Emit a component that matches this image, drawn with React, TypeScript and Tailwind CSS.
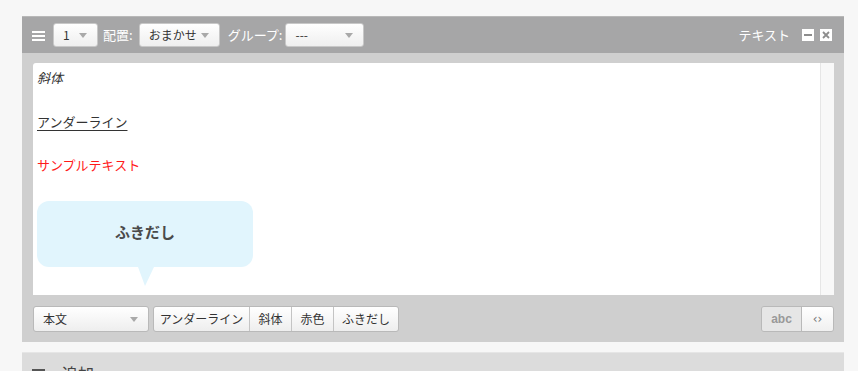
import React from "react";

const font = { fontFamily: '"Noto Sans CJK JP", "Noto Sans", "Liberation Sans", sans-serif' };

function Caret() {
  return (
    <svg width="8" height="5" viewBox="0 0 8 5" className="shrink-0">
      <polygon points="0,0 8,0 4,5" fill="#a9a9a9" />
    </svg>
  );
}

function Select({ label, width }: { label: string; width: string }) {
  return (
    <div
      className={`${width} h-[24px] flex items-center justify-between pl-[9px] pr-[10px] rounded-[3px] bg-gradient-to-b from-white to-[#efefef] border border-[#c8c8c8] text-[12px] text-[#333]`}
    >
      <span>{label}</span>
      <Caret />
    </div>
  );
}

function Hamburger({ color }: { color: string }) {
  return (
    <svg width="13" height="11" viewBox="0 0 13 11">
      <rect x="0" y="1" width="13" height="2" fill={color} />
      <rect x="0" y="5" width="13" height="2" fill={color} />
      <rect x="0" y="9" width="13" height="2" fill={color} />
    </svg>
  );
}

export default function App() {
  return (
    <div className="w-[858px] h-[371px] overflow-hidden bg-[#f7f7f7] pt-[16px] pl-[22px] pr-[14px]" style={font}>
      {/* panel */}
      <div className="bg-[#cfcfcf]">
        {/* header */}
        <div className="h-[37px] bg-[#a6a6a7] border-t border-[#b8b8b8] flex items-center pl-[10px] pr-[12px] text-white text-[13px]">
          <Hamburger color="#ffffff" />
          <div className="ml-[8px]">
            <Select label="1" width="w-[45px]" />
          </div>
          <span className="ml-[5px]">配置:</span>
          <div className="ml-[6px]">
            <Select label="おまかせ" width="w-[81px]" />
          </div>
          <span className="ml-[8px]">グループ:</span>
          <div className="ml-[3px]">
            <Select label="---" width="w-[79px]" />
          </div>
          <span className="ml-auto">テキスト</span>
          <div className="ml-[12px] w-[12px] h-[12px] bg-white flex items-center justify-center">
            <div className="w-[8px] h-[2px] bg-[#8d8d8d]" />
          </div>
          <div className="ml-[6px] w-[12px] h-[12px] bg-white flex items-center justify-center">
            <svg width="8" height="8" viewBox="0 0 8 8">
              <path d="M1 1L7 7M7 1L1 7" stroke="#8d8d8d" strokeWidth="1.8" />
            </svg>
          </div>
        </div>

        {/* body */}
        <div className="pt-[10px] pl-[11px] pr-[10px] pb-[10px]">
          <div className="h-[232px] bg-white rounded-tl-[3px] flex">
            <div className="flex-1 pl-[4px] pt-[6px] flex flex-col items-start text-[13px] leading-[18px] text-[#333]">
              <p className="italic">斜体</p>
              <p className="mt-[26px] underline underline-offset-[3px]">アンダーライン</p>
              <p className="mt-[25px] text-[#ff1a1a]">サンプルテキスト</p>
              <div className="relative mt-[27px]">
                <div className="w-[216px] h-[66px] pb-[4px] rounded-[12px] bg-[#e1f5fd] flex items-center justify-center text-[15px] font-bold text-[#4a4a4a]">
                  ふきだし
                </div>
                <svg className="absolute left-[101px] top-[66px]" width="16" height="19" viewBox="0 0 16 19">
                  <polygon points="0,0 16,0 7,19" fill="#e1f5fd" />
                </svg>
              </div>
            </div>
            <div className="w-[14px] bg-[#f8f8f8] border-l border-[#e6e6e6]" />
          </div>

          {/* toolbar */}
          <div className="mt-[11px] flex items-center text-[12px] text-[#333]">
            <div className="w-[116px] h-[26px] flex items-center justify-between pl-[9px] pr-[10px] rounded-[3px] bg-gradient-to-b from-white to-[#eeeeee] border border-[#b9b9b9]">
              <span>本文</span>
              <Caret />
            </div>
            <div className="ml-[4px] h-[26px] flex rounded-[3px] border border-[#b9b9b9] bg-gradient-to-b from-white to-[#eeeeee] overflow-hidden">
              <div className="w-[96px] flex items-center justify-center border-r border-[#c4c4c4]">アンダーライン</div>
              <div className="w-[42px] flex items-center justify-center border-r border-[#c4c4c4]">斜体</div>
              <div className="w-[42px] flex items-center justify-center border-r border-[#c4c4c4]">赤色</div>
              <div className="w-[64px] flex items-center justify-center">ふきだし</div>
            </div>
            <div className="ml-auto h-[26px] flex rounded-[3px] border border-[#b9b9b9] overflow-hidden">
              <div className="w-[40px] flex items-center justify-center bg-[#e6e6e6] text-[#999] border-r border-[#b9b9b9] font-semibold" style={{ fontFamily: '"Liberation Sans", sans-serif' }}>
                abc
              </div>
              <div className="w-[31px] flex items-center justify-center bg-gradient-to-b from-white to-[#f0f0f0] text-[#777] text-[12px]" style={{ fontFamily: '"DejaVu Sans", sans-serif' }}>
                ‹›
              </div>
            </div>
          </div>
        </div>
      </div>

      {/* next panel */}
      <div className="mt-[10px] h-[40px] bg-[#dcdcdc] border-t border-[#e6e6e6] flex items-start pt-[8px] pl-[10px] text-[16px] text-[#444]">
        <div className="pt-[7px]">
          <Hamburger color="#555555" />
        </div>
        <span className="ml-[17px]">追加</span>
      </div>
    </div>
  );
}
